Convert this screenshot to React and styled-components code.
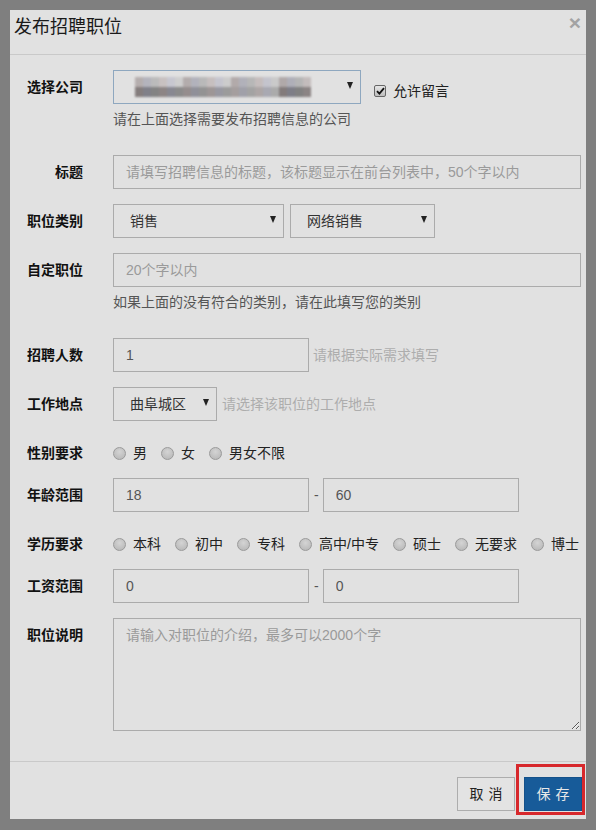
import styled, { createGlobalStyle } from 'styled-components'

const GlobalStyle = createGlobalStyle`
	html, body {
		margin: 0;
		padding: 0;
		background: #7f7f7f;
	}
	body {
		font-family: 'Liberation Sans', 'Noto Sans CJK SC', sans-serif;
		font-size: 14px;
		line-height: 20px;
		color: #333;
	}
`

const FONT = `'Liberation Sans', 'Noto Sans CJK SC', sans-serif`

const Page = styled.div`
	width: 596px;
	height: 830px;
	padding: 10px 10px 0;
	box-sizing: border-box;
	overflow: hidden;
	background: #7f7f7f;
`

const Modal = styled.div`
	width: 576px;
	background: #e1e1e1;
`

const Header = styled.div`
	display: flex;
	justify-content: space-between;
	align-items: flex-start;
	height: 45px;
	box-sizing: border-box;
	padding: 7px 5px 0 4px;
	border-bottom: 1px solid #c9c9c9;
`

const Title = styled.h4`
	margin: 0;
	font-size: 18px;
	line-height: 20px;
	font-weight: normal;
	color: #1a1a1a;
`

const Close = styled.span`
	margin-top: -4px;
	font-family: 'Liberation Sans', sans-serif;
	font-size: 21px;
	line-height: 20px;
	font-weight: bold;
	color: #a3a3a3;
`

const Body = styled.div`
	padding: 15px 5px 15px 0;
`

const Row = styled.div`
	display: flex;
	margin-bottom: 15px;
`

const Label = styled.label`
	flex: 0 0 73px;
	margin-right: 30px;
	padding-top: 7px;
	text-align: right;
	font-weight: bold;
	color: #111;
	white-space: nowrap;
`

const Field = styled.div`
	flex: 1;
	min-width: 0;
`

const Inline = styled.div`
	display: flex;
	align-items: ${(p) => p.$align || 'center'};
	gap: ${(p) => p.$gap || 0}px;
`

const Input = styled.input`
	display: block;
	width: ${(p) => (p.$w ? `${p.$w}px` : '100%')};
	height: 34px;
	box-sizing: border-box;
	padding: 6px 12px;
	border: 1px solid #ababab;
	border-radius: 0;
	background: transparent;
	font: 14px/20px ${FONT};
	color: #555;
	outline: none;

	&::placeholder {
		color: #9a9a9a;
	}
`

const TextArea = styled.textarea`
	display: block;
	width: 100%;
	height: 113px;
	box-sizing: border-box;
	padding: 6px 12px;
	border: 1px solid #ababab;
	border-radius: 0;
	background: transparent;
	font: 14px/20px ${FONT};
	color: #555;
	outline: none;

	&::placeholder {
		color: #9a9a9a;
	}
`

const Select = styled.div`
	display: flex;
	align-items: center;
	justify-content: space-between;
	width: ${(p) => p.$w}px;
	height: 34px;
	box-sizing: border-box;
	padding: 0 7px 0 ${(p) => p.$pl || 16}px;
	border: 1px solid ${(p) => p.$border || '#ababab'};
	color: #333;
	flex-shrink: 0;
`

const Arrow = styled.span`
	width: 0;
	height: 0;
	margin-top: -3px;
	border-left: 3.5px solid transparent;
	border-right: 3.5px solid transparent;
	border-top: 7px solid #222;
`

const Mosaic = styled.div`
	display: grid;
	grid-template-columns: repeat(24, 8px);
	grid-auto-rows: 10px;
	filter: blur(1.3px);
	opacity: 0.9;
`

const Cell = styled.span`
	display: block;
`

const Check = styled.label`
	display: flex;
	align-items: center;
	margin-left: 13px;
	padding-top: 11px;
	color: #222;
`

const Box = styled.span`
	display: flex;
	align-items: center;
	justify-content: center;
	width: 12px;
	height: 12px;
	box-sizing: border-box;
	margin-right: 7px;
	border: 1px solid #666;
	border-radius: 2px;
	background: linear-gradient(#e6e6e6, #bdbdbd);
`

const Help = styled.p`
	margin: 5px 0 11px;
	color: #555;
`

const Hint = styled.span`
	margin-left: ${(p) => p.$ml || 4}px;
	color: #adadad;
	white-space: nowrap;
`

const Dash = styled.span`
	margin: 0 4px 0 5px;
	color: #555;
`

const Radios = styled.div`
	display: flex;
	flex-wrap: nowrap;
	padding-top: 7px;
`

const Radio = styled.label`
	display: flex;
	align-items: center;
	margin-right: 14px;
	color: #222;
	white-space: nowrap;
`

const Dot = styled.span`
	width: 13px;
	height: 13px;
	box-sizing: border-box;
	margin-right: 7px;
	border: 1px solid #9a9a9a;
	border-radius: 50%;
	background: radial-gradient(circle at 50% 35%, #d4d4d4, #b4b4b4);
`

const Footer = styled.div`
	display: flex;
	justify-content: flex-end;
	gap: 9px;
	padding: 15px 4px 8px;
	border-top: 1px solid #c9c9c9;
`

const Button = styled.button`
	width: 58px;
	height: 34px;
	padding: 0 0 0 5px;
	border: 1px solid ${(p) => (p.$primary ? '#14518a' : '#adadad')};
	border-radius: 0;
	background: ${(p) => (p.$primary ? '#175b99' : '#e3e3e3')};
	color: ${(p) => (p.$primary ? '#e8e8e8' : '#222')};
	font: 14px/20px ${FONT};
	letter-spacing: 5px;
`

const SaveWrap = styled.div`
	position: relative;
`

const Highlight = styled.span`
	position: absolute;
	top: -13px;
	bottom: -4px;
	left: -8px;
	right: -3px;
	border: 3px solid #d7282c;
	pointer-events: none;
`

const mosaicCells = Array.from({ length: 48 }, (_, i) => {
	const top = i < 24
	const col = i % 24
	const v = top ? 206 - ((col * 37) % 44) : 168 - ((col * 53) % 56)
	const tint = (col * 7) % 3
	if (col === 0 || col === 23) return 'transparent'
	return `rgb(${v + (tint === 1 ? 8 : 0)}, ${v}, ${v + (tint === 2 ? 10 : 0)})`
})

const genders = ['男', '女', '男女不限']
const degrees = ['本科', '初中', '专科', '高中/中专', '硕士', '无要求', '博士']

const App = () => {
	return (
		<>
			<GlobalStyle />
			<Page>
				<Modal>
					<Header>
						<Title>发布招聘职位</Title>
						<Close>×</Close>
					</Header>
					<Body>
						<Row>
							<Label>选择公司</Label>
							<Field>
								<Inline $align="flex-start">
									<Select $w={248} $pl={13} $border="#8ea7bf">
										<Mosaic>
											{mosaicCells.map((c, i) => (
												<Cell key={i} style={{ background: c }} />
											))}
										</Mosaic>
										<Arrow />
									</Select>
									<Check>
										<Box>
											<svg width="9" height="8" viewBox="0 0 9 8">
												<path d="M1 4.2 L3.4 6.6 L8 1.2" fill="none" stroke="#111" strokeWidth="1.8" />
											</svg>
										</Box>
										允许留言
									</Check>
								</Inline>
								<Help>请在上面选择需要发布招聘信息的公司</Help>
							</Field>
						</Row>
						<Row>
							<Label>标题</Label>
							<Field>
								<Input placeholder="请填写招聘信息的标题，该标题显示在前台列表中，50个字以内" />
							</Field>
						</Row>
						<Row>
							<Label>职位类别</Label>
							<Field>
								<Inline $gap={6}>
									<Select $w={171}>
										销售
										<Arrow />
									</Select>
									<Select $w={145}>
										网络销售
										<Arrow />
									</Select>
								</Inline>
							</Field>
						</Row>
						<Row>
							<Label>自定职位</Label>
							<Field>
								<Input placeholder="20个字以内" />
								<Help>如果上面的没有符合的类别，请在此填写您的类别</Help>
							</Field>
						</Row>
						<Row>
							<Label>招聘人数</Label>
							<Field>
								<Inline>
									<Input $w={196} defaultValue="1" />
									<Hint>请根据实际需求填写</Hint>
								</Inline>
							</Field>
						</Row>
						<Row>
							<Label>工作地点</Label>
							<Field>
								<Inline>
									<Select $w={104}>
										曲阜城区
										<Arrow />
									</Select>
									<Hint $ml={5}>请选择该职位的工作地点</Hint>
								</Inline>
							</Field>
						</Row>
						<Row>
							<Label>性别要求</Label>
							<Field>
								<Radios>
									{genders.map((g) => (
										<Radio key={g}>
											<Dot />
											{g}
										</Radio>
									))}
								</Radios>
							</Field>
						</Row>
						<Row>
							<Label>年龄范围</Label>
							<Field>
								<Inline>
									<Input $w={196} defaultValue="18" />
									<Dash>-</Dash>
									<Input $w={196} defaultValue="60" />
								</Inline>
							</Field>
						</Row>
						<Row>
							<Label>学历要求</Label>
							<Field>
								<Radios>
									{degrees.map((d) => (
										<Radio key={d}>
											<Dot />
											{d}
										</Radio>
									))}
								</Radios>
							</Field>
						</Row>
						<Row>
							<Label>工资范围</Label>
							<Field>
								<Inline>
									<Input $w={196} defaultValue="0" />
									<Dash>-</Dash>
									<Input $w={196} defaultValue="0" />
								</Inline>
							</Field>
						</Row>
						<Row>
							<Label>职位说明</Label>
							<Field>
								<TextArea placeholder="请输入对职位的介绍，最多可以2000个字" />
							</Field>
						</Row>
					</Body>
					<Footer>
						<Button>取消</Button>
						<SaveWrap>
							<Button $primary>保存</Button>
							<Highlight />
						</SaveWrap>
					</Footer>
				</Modal>
			</Page>
		</>
	)
}

export default App
